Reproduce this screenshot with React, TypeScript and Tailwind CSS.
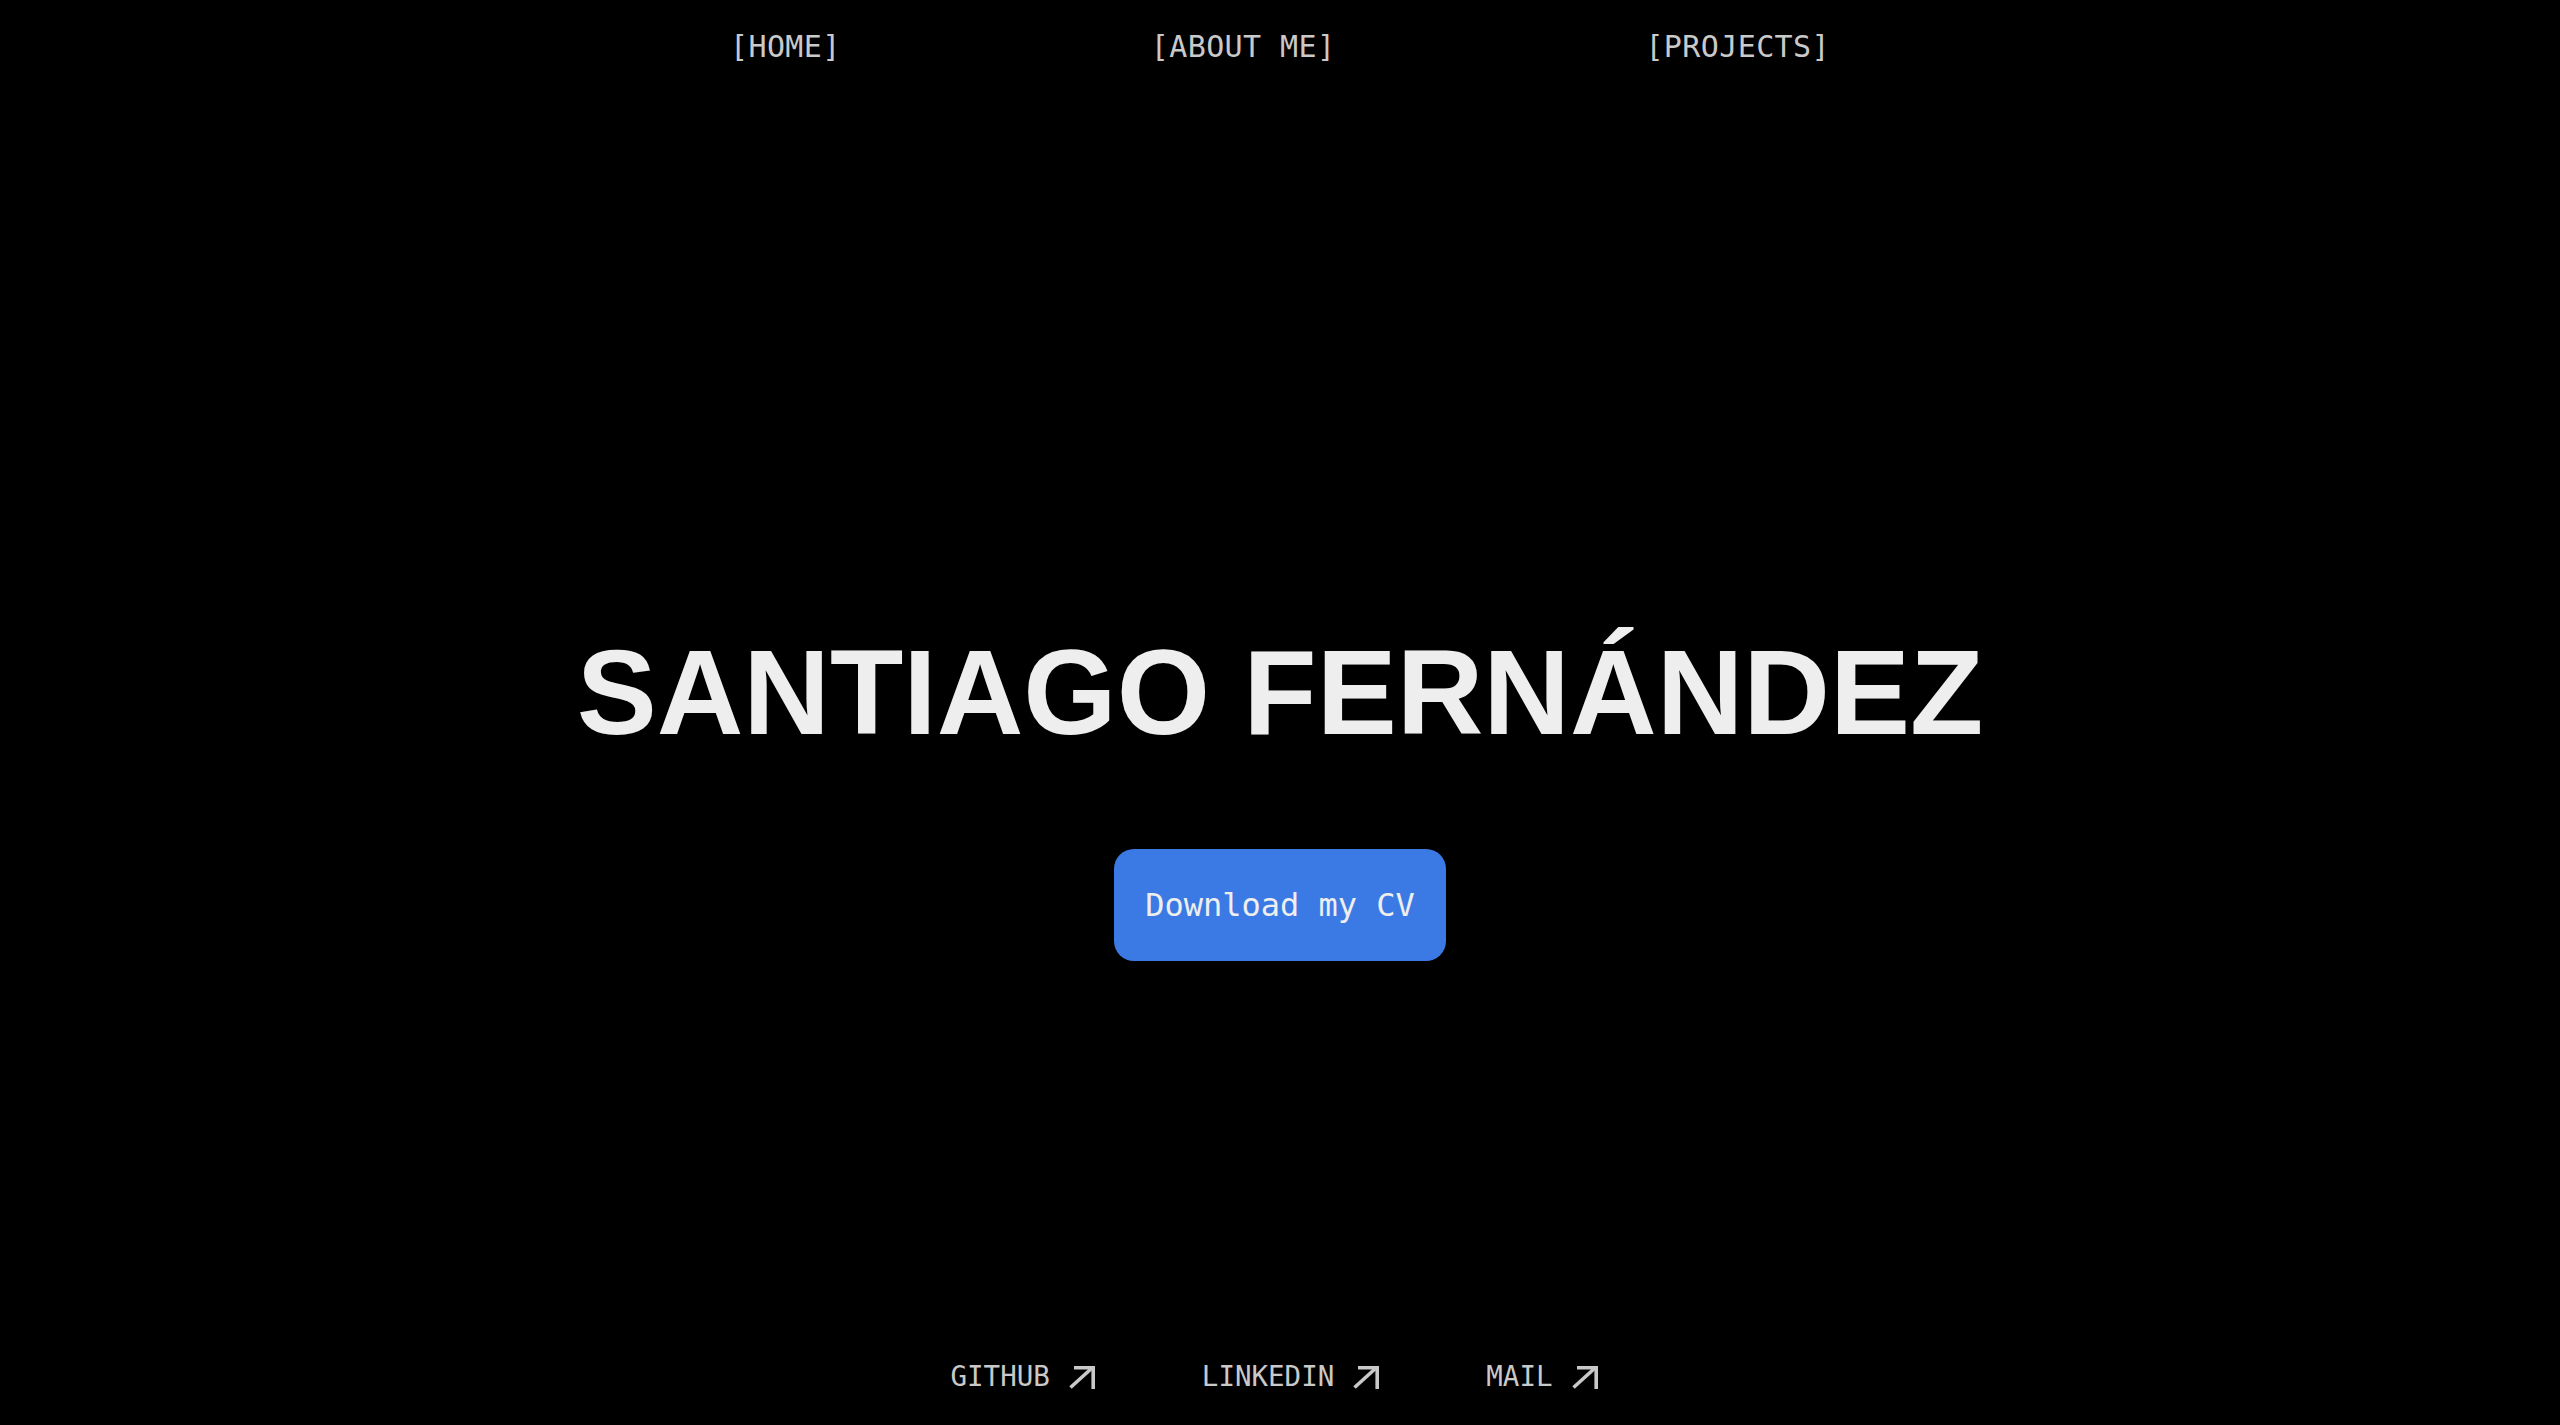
import React from 'react';

const navItems = ['[HOME]', '[ABOUT ME]', '[PROJECTS]'];
const links = ['GITHUB', 'LINKEDIN', 'MAIL'];

function ArrowUpRight() {
  return (
    <svg width="26" height="23" viewBox="0 0 26 23" fill="none" className="block">
      <path d="M1.5 21.5 L23 2" stroke="#c9c9c9" strokeWidth="3.6" />
      <path d="M5 1.8 H24.2 V23" stroke="#c9c9c9" strokeWidth="3.6" />
    </svg>
  );
}

export default function App() {
  return (
    <div className="min-h-screen flex flex-col bg-black text-[#eeeeee]">
      <nav className="h-[94px] flex items-center justify-center gap-[310px] font-['DejaVu_Sans_Mono',monospace] text-[30px] leading-none tracking-[0.4px] text-[#c9c9c9]">
        {navItems.map((item) => (
          <a key={item} href="#">
            {item}
          </a>
        ))}
      </nav>

      <main className="flex-1 flex flex-col items-center pt-[538px]">
        <h1 className="font-['Liberation_Sans',Arial,sans-serif] font-bold text-[120px] leading-none text-[#eeeeee]">
          SANTIAGO FERNÁNDEZ
        </h1>
        <button className="mt-[97px] w-[332px] h-[112px] rounded-[20px] bg-[#3b7ae4] font-['DejaVu_Sans_Mono',monospace] text-[32px] leading-none text-[#eeeeee]">
          Download my CV
        </button>
      </main>

      <footer className="h-[96px] flex items-center justify-center pr-[12px] gap-[107px] font-['DejaVu_Sans_Mono',monospace] text-[27.5px] leading-none text-[#c9c9c9]">
        {links.map((link) => (
          <a key={link} href="#" className="flex items-center gap-[19px]">
            <span>{link}</span>
            <ArrowUpRight />
          </a>
        ))}
      </footer>
    </div>
  );
}
